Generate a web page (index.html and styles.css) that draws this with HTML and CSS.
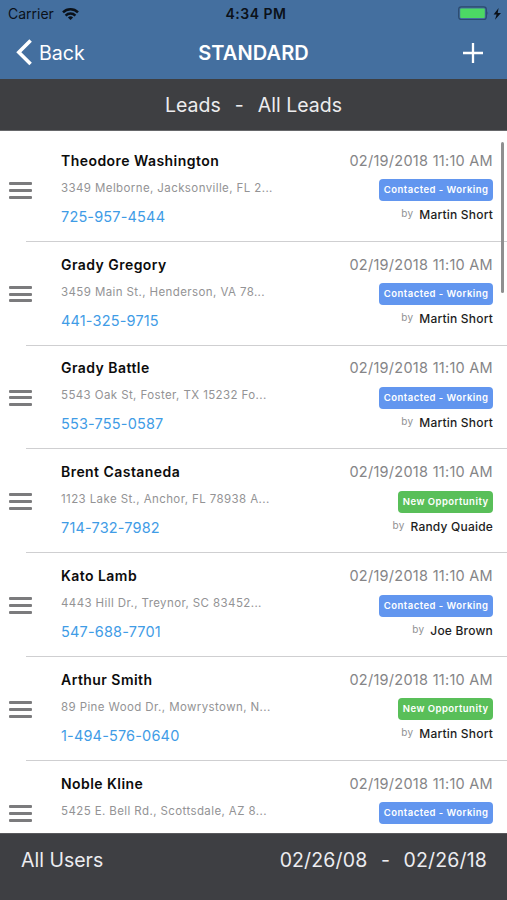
FILE: index.html
```html
<!DOCTYPE html>
<html lang="en">
<head>
  <meta charset="UTF-8" />
  <meta name="viewport" content="width=device-width, initial-scale=1.0"/>
  <title>Leads</title>
  <link rel="stylesheet" href="styles.css">
</head>
<body>
  <header>
    <div class="status-bar">
      <div class="carrier">
        <span>Carrier</span>
        <svg width="17" height="12" viewBox="0 0 17 12" fill="none" stroke="#0b1119" stroke-width="2.5">
          <path d="M1 4.4a10.8 10.8 0 0 1 15 0"/>
          <path d="M3.6 7.6a7 7 0 0 1 9.8 0"/>
          <path d="M8.5 12L5.9 9.4a3.8 3.8 0 0 1 5.2 0z" fill="#0b1119" stroke="none"/>
        </svg>
      </div>
      <span class="time">4:34 PM</span>
      <div class="battery">
        <svg width="44" height="16" viewBox="0 0 44 16">
          <rect x="0.7" y="0.9" width="27.6" height="12.6" rx="2.5" fill="none" stroke="#2c4a6e" stroke-width="1.2"/>
          <rect x="2.2" y="2.4" width="24.6" height="9.6" rx="1" fill="#4cd964"/>
          <path d="M29.5 5.2q1.6 2 0 4z" fill="#2c4a6e"/>
          <path d="M40.6 2L35.6 8.5h3L37 13.8 43 6.9h-3.3z" fill="#0b1119"/>
        </svg>
      </div>
    </div>
    <div class="nav-bar">
      <button class="back-btn">
        <svg width="17" height="27" viewBox="0 0 17 27" fill="none" stroke="#fff" stroke-width="3.6">
          <path d="M15.6 1.5L3.8 13.3l11.8 11.8"/>
        </svg>
        <span>Back</span>
      </button>
      <h1>STANDARD</h1>
      <button class="add-btn">
        <svg width="20" height="20" viewBox="0 0 20 20" stroke="#fff" stroke-width="2.3">
          <path d="M10 0v20M0 10h20"/>
        </svg>
      </button>
    </div>
  </header>

  <div class="list-title"><span>Leads</span><span>-</span><span>All Leads</span></div>

  <main class="lead-list">
    <div class="lead">
      <div class="handle"><i></i><i></i><i></i></div>
      <div class="lead-body">
        <div class="contact">
          <div class="name">Theodore Washington</div>
          <div class="address">3349 Melborne, Jacksonville, FL 2...</div>
          <a class="phone">725-957-4544</a>
        </div>
        <div class="details">
          <div class="date">02/19/2018 11:10 AM</div>
          <div class="tag contacted">Contacted - Working</div>
          <div class="owner"><small>by</small>Martin Short</div>
        </div>
      </div>
    </div>
    <div class="lead">
      <div class="handle"><i></i><i></i><i></i></div>
      <div class="lead-body">
        <div class="contact">
          <div class="name">Grady Gregory</div>
          <div class="address">3459 Main St., Henderson, VA 78...</div>
          <a class="phone">441-325-9715</a>
        </div>
        <div class="details">
          <div class="date">02/19/2018 11:10 AM</div>
          <div class="tag contacted">Contacted - Working</div>
          <div class="owner"><small>by</small>Martin Short</div>
        </div>
      </div>
    </div>
    <div class="lead">
      <div class="handle"><i></i><i></i><i></i></div>
      <div class="lead-body">
        <div class="contact">
          <div class="name">Grady Battle</div>
          <div class="address">5543 Oak St, Foster, TX 15232 Fo...</div>
          <a class="phone">553-755-0587</a>
        </div>
        <div class="details">
          <div class="date">02/19/2018 11:10 AM</div>
          <div class="tag contacted">Contacted - Working</div>
          <div class="owner"><small>by</small>Martin Short</div>
        </div>
      </div>
    </div>
    <div class="lead">
      <div class="handle"><i></i><i></i><i></i></div>
      <div class="lead-body">
        <div class="contact">
          <div class="name">Brent Castaneda</div>
          <div class="address">1123 Lake St., Anchor, FL 78938 A...</div>
          <a class="phone">714-732-7982</a>
        </div>
        <div class="details">
          <div class="date">02/19/2018 11:10 AM</div>
          <div class="tag new">New Opportunity</div>
          <div class="owner"><small>by</small>Randy Quaide</div>
        </div>
      </div>
    </div>
    <div class="lead">
      <div class="handle"><i></i><i></i><i></i></div>
      <div class="lead-body">
        <div class="contact">
          <div class="name">Kato Lamb</div>
          <div class="address">4443 Hill Dr., Treynor, SC 83452...</div>
          <a class="phone">547-688-7701</a>
        </div>
        <div class="details">
          <div class="date">02/19/2018 11:10 AM</div>
          <div class="tag contacted">Contacted - Working</div>
          <div class="owner"><small>by</small>Joe Brown</div>
        </div>
      </div>
    </div>
    <div class="lead">
      <div class="handle"><i></i><i></i><i></i></div>
      <div class="lead-body">
        <div class="contact">
          <div class="name">Arthur Smith</div>
          <div class="address">89 Pine Wood Dr., Mowrystown, N...</div>
          <a class="phone">1-494-576-0640</a>
        </div>
        <div class="details">
          <div class="date">02/19/2018 11:10 AM</div>
          <div class="tag new">New Opportunity</div>
          <div class="owner"><small>by</small>Martin Short</div>
        </div>
      </div>
    </div>
    <div class="lead">
      <div class="handle"><i></i><i></i><i></i></div>
      <div class="lead-body">
        <div class="contact">
          <div class="name">Noble Kline</div>
          <div class="address">5425 E. Bell Rd., Scottsdale, AZ 8...</div>
        </div>
        <div class="details">
          <div class="date">02/19/2018 11:10 AM</div>
          <div class="tag contacted">Contacted - Working</div>
        </div>
      </div>
    </div>
    <div class="scrollbar"></div>
  </main>

  <footer>
    <span>All Users</span>
    <div class="range"><span>02/26/08</span><span>-</span><span>02/26/18</span></div>
  </footer>
</body>
</html>
```
FILE: styles.css
```css
* {
  box-sizing: border-box;
}
body {
  margin: 0;
  height: 900px;
  display: flex;
  flex-direction: column;
  overflow: hidden;
  font-family: Inter, "Liberation Sans", sans-serif;
  background-color: #fff;
}
header {
  height: 79px;
  flex-shrink: 0;
  background-color: #446f9f;
}
.status-bar {
  display: grid;
  grid-template-columns: 1fr auto 1fr;
  align-items: center;
  height: 27px;
  padding: 0 3px 0 8px;
  color: #0b1119;
  font-size: 14px;
}
.carrier {
  display: flex;
  align-items: center;
  gap: 8px;
}
.time {
  font-weight: 600;
  font-size: 14px;
  letter-spacing: 0.5px;
}
.battery {
  display: flex;
  justify-content: flex-end;
  padding-right: 2px;
}
.nav-bar {
  display: grid;
  grid-template-columns: 1fr auto 1fr;
  align-items: center;
  height: 51px;
  padding: 0 15px;
  color: #fff;
}
button {
  display: flex;
  align-items: center;
  padding: 0;
  border: none;
  background: none;
  color: #fff;
  font-family: inherit;
  cursor: pointer;
}
.back-btn {
  gap: 7px;
  font-size: 19.6px;
}
.add-btn {
  justify-self: end;
  margin-right: 9px;
}
h1 {
  margin: 0;
  font-size: 20px;
  font-weight: 600;
  letter-spacing: 0.1px;
}
.list-title {
  display: flex;
  justify-content: center;
  align-items: center;
  gap: 14px;
  height: 52px;
  flex-shrink: 0;
  padding-top: 1px;
  background-color: #3e3f42;
  border-bottom: 1px solid #66676a;
  color: #ececee;
  font-size: 19.5px;
}
.lead-list {
  position: relative;
  flex: 1;
  min-height: 0;
  padding-top: 7px;
  overflow: hidden;
}
.lead {
  display: flex;
  height: 103.83px;
}
.handle {
  display: flex;
  flex-direction: column;
  gap: 3.8px;
  width: 26px;
  padding: 44px 0 0 9px;
}
.handle i {
  width: 23px;
  height: 3px;
  border-radius: 1px;
  background-color: #7b7b7d;
}
.lead-body {
  display: flex;
  justify-content: space-between;
  flex: 1;
  padding: 12.8px 14px 0 35px;
  border-bottom: 1px solid #cfcfd1;
  white-space: nowrap;
}
.name {
  height: 28px;
  line-height: 20px;
  color: #0c0c0c;
  font-size: 14px;
  font-weight: 600;
  letter-spacing: 0.45px;
}
.address {
  height: 28px;
  line-height: 18px;
  color: #939395;
  font-size: 11.5px;
  letter-spacing: 0.4px;
}
.phone {
  display: block;
  line-height: 20px;
  color: #3f9ce6;
  font-size: 14.5px;
  letter-spacing: 0.17px;
}
.details {
  display: flex;
  flex-direction: column;
  align-items: flex-end;
}
.date {
  line-height: 20px;
  color: #858587;
  font-size: 14.5px;
  letter-spacing: 0.27px;
}
.tag {
  height: 22px;
  margin-top: 8.4px;
  padding: 0 4.5px 0 5px;
  border-radius: 4px;
  line-height: 22px;
  color: #fff;
  font-size: 9.5px;
  font-weight: 600;
  letter-spacing: 0.48px;
}
.contacted {
  background-color: #6296ef;
}
.new {
  background-color: #59bf59;
}
.owner {
  display: flex;
  gap: 6px;
  margin-top: 5px;
  line-height: 18px;
  color: #1d1d1d;
  font-size: 12px;
  font-weight: 500;
  letter-spacing: 0.2px;
}
.owner small {
  line-height: 15px;
  color: #919193;
  font-size: 10px;
  font-weight: 400;
}
.scrollbar {
  position: absolute;
  top: 11px;
  right: 3.5px;
  width: 3px;
  height: 151px;
  border-radius: 2px;
  background-color: #8f8f90;
}
footer {
  display: flex;
  justify-content: space-between;
  height: 67px;
  flex-shrink: 0;
  padding: 14px 20px 0 21px;
  background-color: #3e3f43;
  border-top: 1px solid #59595c;
  color: #ececf0;
  font-size: 19.5px;
  line-height: 24px;
}
.range {
  display: flex;
  gap: 13.5px;
  letter-spacing: 0.15px;
}
```
